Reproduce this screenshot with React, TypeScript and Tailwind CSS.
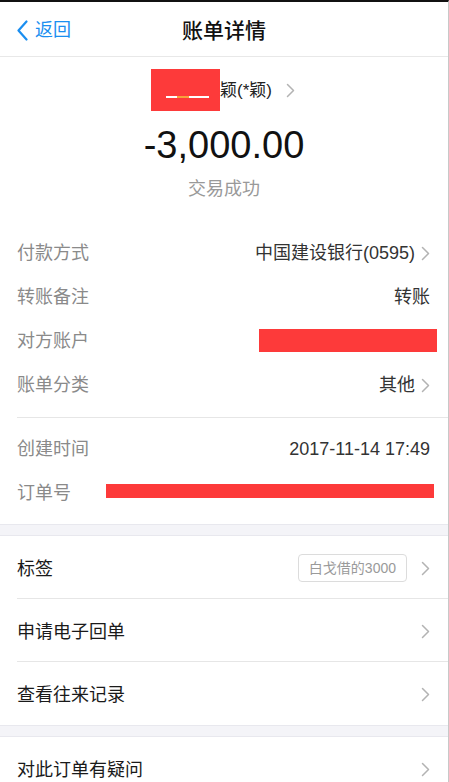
import React from "react";

const font = { fontFamily: '"Liberation Sans", "Noto Sans CJK SC", sans-serif' };

function Chevron({ className = "" }: { className?: string }) {
  return (
    <svg width="9" height="15" viewBox="0 0 9 15" className={className}>
      <polyline points="1.5,1.5 7.5,7.5 1.5,13.5" fill="none" stroke="#b3b3b3" strokeWidth="1.5" strokeLinecap="round" strokeLinejoin="round" />
    </svg>
  );
}

function DetailRow({ label, children }: { label: string; children: React.ReactNode }) {
  return (
    <div className="flex h-[44px] items-center justify-between">
      <span className="pt-[2px] text-[18px] text-[#8a8a8a]">{label}</span>
      {children}
    </div>
  );
}

function LinkRow({ label, last, extra }: { label: string; last?: boolean; extra?: React.ReactNode }) {
  return (
    <div className="pl-[17px]">
      <div className={`flex h-[63px] items-center justify-between pr-[18px] ${last ? "" : "border-b border-[#e6e6e6]"}`}>
        <span className="pt-[4px] text-[18px] text-[#1a1a1a]">{label}</span>
        <div className="flex items-center pt-[2px]">
          {extra}
          <Chevron />
        </div>
      </div>
    </div>
  );
}

export default function App() {
  return (
    <div style={font} className="h-[782px] w-[449px] overflow-hidden border-t-2 border-r border-t-[#111] border-r-[#c8c8c8] bg-white">
      <header className="relative flex h-[55px] items-center justify-center border-b border-[#e8e8e8] pt-[3px]">
        <div className="absolute left-[17px] top-0 flex h-full items-center pt-[3px]">
          <svg width="11" height="21" viewBox="0 0 11 21">
            <polyline points="9.5,1.5 1.5,10.5 9.5,19.5" fill="none" stroke="#1a8ef0" strokeWidth="2.2" strokeLinecap="round" strokeLinejoin="round" />
          </svg>
          <span className="ml-[7px] text-[18px] text-[#1a8ef0]">返回</span>
        </div>
        <h1 className="text-[21px] font-medium text-[#111]">账单详情</h1>
      </header>

      <div className="flex flex-col items-center">
        <div className="mt-[12px] flex h-[42px] items-center pr-[2px]">
          <div className="relative h-[42px] w-[69px] bg-[#fd3a3a]">
            <div className="absolute left-[15px] top-[27px] h-[2px] w-[43px] bg-white" />
            <div className="absolute left-[26px] top-[27px] h-[2px] w-[12px] bg-[#f7a13b]" />
          </div>
          <span className="pt-[1px] text-[17px] text-[#222]">颖(*颖)</span>
          <Chevron className="ml-[14px]" />
        </div>
        <div className="mt-[12px] flex h-[44px] items-center text-[38px] text-[#111]">-3,000.00</div>
        <div className="mt-[9px] flex h-[24px] items-center pt-[2px] text-[18px] text-[#999]">交易成功</div>
      </div>

      <div className="mt-[30px] pl-[17px] pr-[18px]">
        <DetailRow label="付款方式">
          <div className="flex items-center pt-[2px] text-[18px] text-[#333]">
            中国建设银行(0595)
            <Chevron className="ml-[6px]" />
          </div>
        </DetailRow>
        <DetailRow label="转账备注">
          <span className="pt-[2px] text-[18px] text-[#333]">转账</span>
        </DetailRow>
        <DetailRow label="对方账户">
          <div className="mr-[-7px] h-[23px] w-[178px] bg-[#fd3a3a]" />
        </DetailRow>
        <DetailRow label="账单分类">
          <div className="flex items-center pt-[2px] text-[18px] text-[#333]">
            其他
            <Chevron className="ml-[6px]" />
          </div>
        </DetailRow>
      </div>

      <div className="ml-[17px] mt-[11px] border-t border-[#e6e6e6]" />

      <div className="pb-[10px] pl-[17px] pr-[18px] pt-[8px]">
        <DetailRow label="创建时间">
          <span className="pt-[2px] text-[18px] text-[#333]">2017-11-14 17:49</span>
        </DetailRow>
        <DetailRow label="订单号">
          <div className="mr-[-4px] mt-[-2px] h-[14px] w-[328px] bg-[#fd3a3a]" />
        </DetailRow>
      </div>

      <div className="h-[12px] border-y border-[#e8e8ee] bg-[#f4f4f8]" />

      <LinkRow
        label="标签"
        extra={
          <span className="mr-[14px] flex h-[28px] items-center rounded-[4px] border border-[#dcdcdc] px-[10px] text-[14px] text-[#9a9a9a]">
            白戈借的3000
          </span>
        }
      />
      <LinkRow label="申请电子回单" />
      <LinkRow label="查看往来记录" last />

      <div className="h-[12px] border-y border-[#e8e8ee] bg-[#f4f4f8]" />

      <LinkRow label="对此订单有疑问" last />
    </div>
  );
}
